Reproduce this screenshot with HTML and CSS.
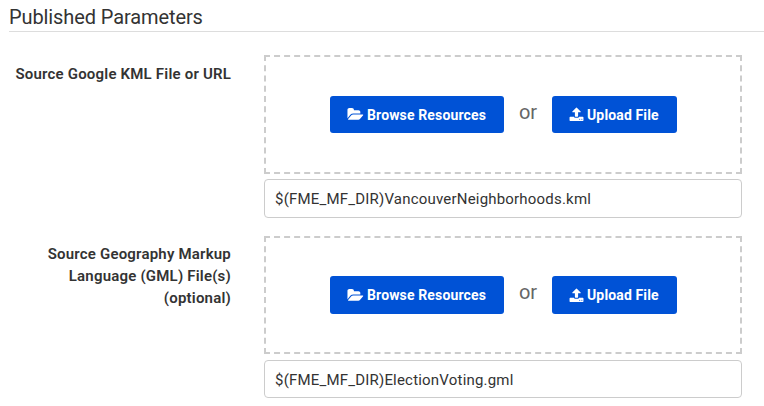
FILE: index.html
```html
<!DOCTYPE html>
<html lang="en">
<head>
<meta charset="utf-8">
<title>Published Parameters</title>
<link rel="stylesheet" href="styles.css">
</head>
<body>
<svg class="sprite" aria-hidden="true">
  <symbol id="folder" viewBox="0 0 1920 1792"><path d="M1879 952q0 31-31 66l-336 396q-43 51-120.500 86.500t-143.500 35.500h-1088q-34 0-60.500-13t-26.500-43q0-31 31-66l336-396q43-51 120.500-86.500t143.500-35.500h1088q34 0 60.500 13t26.500 43zM1536 608v160h-832q-94 0-197 47.500t-164 119.500l-337 396-5 6q0-4-.500-12.500t-.500-12.500v-960q0-92 66-158t158-66h320q92 0 158 66t66 158v32h544q92 0 158 66t66 158z"/></symbol>
  <symbol id="upload" viewBox="0 0 1664 1792"><path d="M1280 1472q0-26-19-45t-45-19-45 19-19 45 19 45 45 19 45-19 19-45zM1536 1472q0-26-19-45t-45-19-45 19-19 45 19 45 45 19 45-19 19-45zM1664 1248v320q0 40-28 68t-68 28h-1472q-40 0-68-28t-28-68v-320q0-40 28-68t68-28h427q21 56 70.500 92t110.500 36h256q61 0 110.500-36t70.500-92h427q40 0 68 28t28 68zM1339 600q-17 40-59 40h-256v448q0 26-19 45t-45 19h-256q-26 0-45-19t-19-45v-448h-256q-42 0-59-40-17-39 14-69l448-448q18-19 45-19t45 19l448 448q31 30 14 69z"/></symbol>
</svg>
<main>
  <h2 class="title">Published Parameters</h2>
  <div class="row">
    <label class="label">Source Google KML File or URL</label>
    <div class="field">
      <div class="drop">
        <button class="btn browse"><svg class="icon folder"><use href="#folder"/></svg><span>Browse Resources</span></button>
        <span class="or">or</span>
        <button class="btn up"><svg class="icon upload"><use href="#upload"/></svg><span>Upload File</span></button>
      </div>
      <input class="input" type="text" value="$(FME_MF_DIR)VancouverNeighborhoods.kml">
    </div>
  </div>
  <div class="row">
    <label class="label">Source Geography Markup Language (GML) File(s) (optional)</label>
    <div class="field">
      <div class="drop">
        <button class="btn browse"><svg class="icon folder"><use href="#folder"/></svg><span>Browse Resources</span></button>
        <span class="or">or</span>
        <button class="btn up"><svg class="icon upload"><use href="#upload"/></svg><span>Upload File</span></button>
      </div>
      <input class="input" type="text" value="$(FME_MF_DIR)ElectionVoting.gml">
    </div>
  </div>
</main>
</body>
</html>
```
FILE: styles.css
```css
* { box-sizing: border-box; }
body { margin: 0; background: #fff; color: #333; font: 15px/22px Roboto, sans-serif; overflow: hidden; }
.sprite { display: none; }
.title { margin: 0 0 23px 9px; height: 32px; border-bottom: 1px solid #ddd; font-size: 20px; font-weight: 400; letter-spacing: -.1px; line-height: 34px; }
.row { display: flex; gap: 33px; margin-bottom: 18px; }
.label { width: 231px; padding: 8px 0 0 10px; text-align: right; font-weight: 600; letter-spacing: .2px; }
.row + .row .label { padding: 7px 0 0 40px; }
.field { width: 478px; }
.drop { height: 119px; display: flex; align-items: flex-start; padding: 39px 0 0 64px; border: 2px dashed #ccc; }
.row + .row .drop { height: 118px; padding-top: 38px; }
.btn { height: 37px; display: flex; align-items: center; border: 0; border-radius: 3px; padding: 0 0 0 17px; background: #0052d6; color: #fff; font: 700 14px/22px Roboto, sans-serif; letter-spacing: .14px; white-space: nowrap; }
.row + .row .btn { height: 38px; }
.browse { width: 174px; }
.up { width: 125px; }
.icon { fill: currentColor; height: 15px; flex: none; }
.folder { width: 17px; margin-right: 3px; }
.upload { width: 15px; margin-right: 3px; }
.or { width: 48px; padding-top: 5px; text-align: center; font-size: 20px; color: #666; }
.input { display: block; width: 478px; height: 39px; margin-top: 5px; padding: 0 10px; border: 1px solid #ccc; border-radius: 4px; background: #fff; color: #333; font: 15px/22px Roboto, sans-serif; letter-spacing: .2px; outline: 0; }
.row + .row .input { height: 38px; margin-top: 6px; padding-top: 2px; }
```
